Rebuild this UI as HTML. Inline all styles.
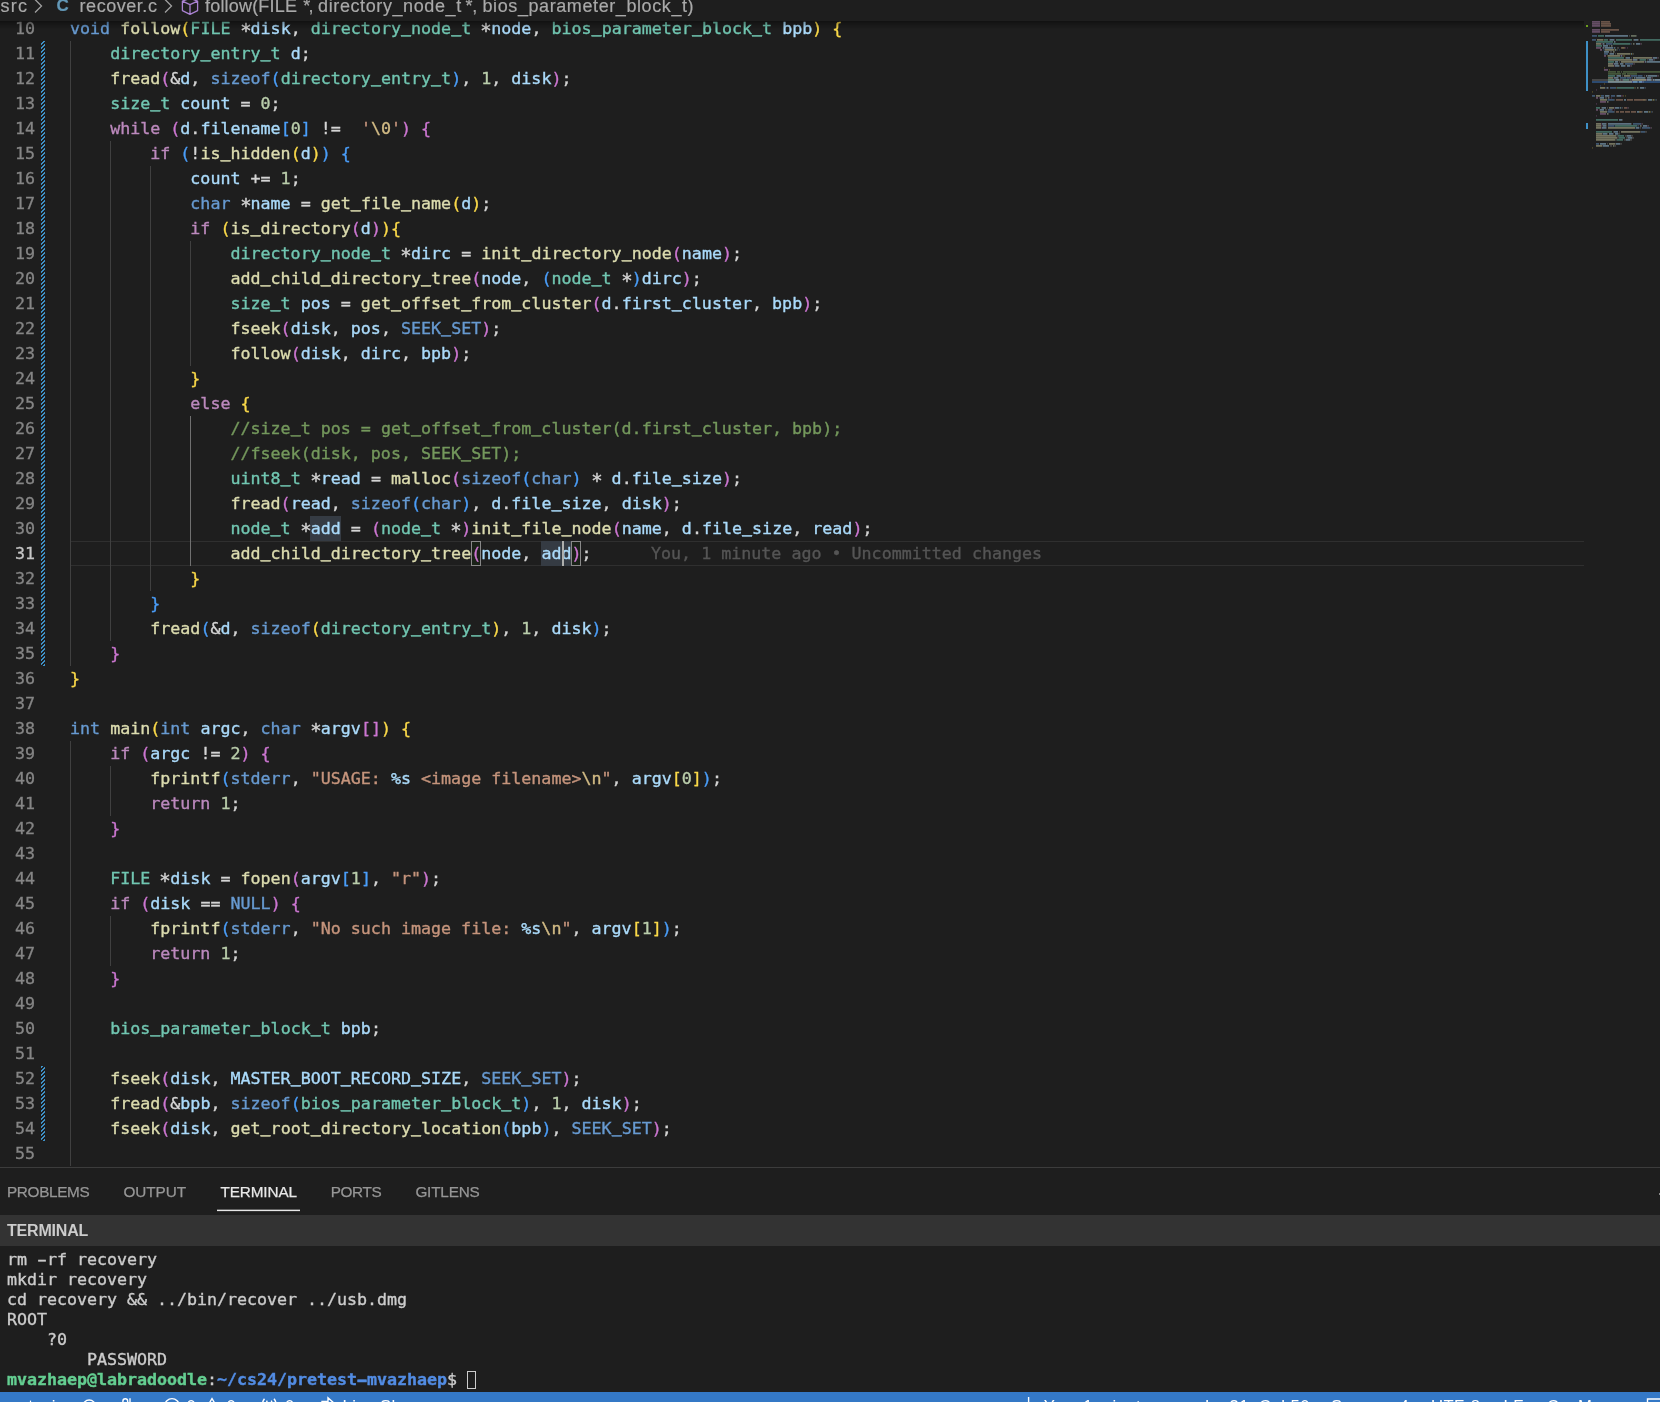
<!DOCTYPE html>
<html><head><meta charset="utf-8"><title>recover.c</title>
<style>
html,body{margin:0;padding:0;background:#1e1e1e;}
body{width:1660px;height:1402px;position:relative;overflow:hidden;font-family:"Liberation Sans",sans-serif;}
#root{position:absolute;left:0;top:0;width:1660px;height:1402px;overflow:hidden;will-change:transform;}
#ed{position:absolute;left:0;top:16px;width:1584px;height:1150px;overflow:hidden;font-family:"DejaVu Sans Mono","Liberation Mono",monospace;font-size:16.66px;line-height:25px;color:#d4d4d4;}
.row{height:25px;position:relative;}
.ln{position:absolute;left:0;top:0;width:35px;text-align:right;color:#858585;-webkit-text-stroke:.3px;}
.ln.cur{color:#c6c6c6;}
.code{position:absolute;left:70px;top:0;white-space:pre;-webkit-text-stroke:.36px;}
u{text-decoration:none;position:relative;top:-1.8px;text-shadow:0 .8px 0 currentColor;}
em{font-style:normal;display:inline-block;transform:translateY(2.4px) scale(1.14);}
.k{color:#679ad1}.c{color:#bc89bd}.t{color:#71c6b1}.f{color:#dcdcaf}.v{color:#aadafa}.n{color:#bacdab}
.s{color:#c5947c}.e{color:#d2bb85}.cm{color:#74985c}.o{color:#d4d4d4}.b0{color:#f9d849}.b1{color:#cc76d1}.b2{color:#4a9df8}
.blame{color:#555555;position:absolute;left:581px;top:0;}
i.g{position:absolute;width:1px;background:#404040;display:block;}
i.ga{background:#707070;}
i.gut{position:absolute;left:41px;width:4px;display:block;background:repeating-linear-gradient(-45deg,#3e90c6 0,#3e90c6 1.6px,transparent 1.6px,transparent 2.83px);}
#curline{position:absolute;left:70px;top:541px;width:1514px;height:23px;border-top:1px solid #2f2f2f;border-bottom:1px solid #2f2f2f;}
.wh{position:absolute;height:25px;background:#353b43;}
.bm{position:absolute;height:23px;width:8px;border:1px solid #888;background:#1a2218;}
#cursor{position:absolute;width:2px;height:25px;background:#aeafad;}
#bc{-webkit-text-stroke:.2px;position:absolute;left:0;top:-5px;height:22px;line-height:22px;font-size:18px;color:#a9a9a9;white-space:pre;}
#bc span{position:absolute;top:0;}
#shadow{position:absolute;left:0;top:21px;width:1584px;height:8px;background:linear-gradient(rgba(0,0,0,.42) 0,rgba(0,0,0,.3) 20%,rgba(0,0,0,0) 100%);}
#panel{position:absolute;left:0;top:1167px;width:1660px;height:225px;border-top:1px solid #3c3c3c;}
.tab{-webkit-text-stroke:.25px;position:absolute;top:14.7px;font-size:15.3px;color:#969696;line-height:18px;}
.tab.act{color:#e7e7e7;}
#tul{position:absolute;left:217px;top:42px;width:83px;height:1px;background:#e7e7e7;box-shadow:0 -1px 0 rgba(231,231,231,.35),0 1px 0 rgba(231,231,231,.12);}
#thead{position:absolute;left:0;top:47px;width:1660px;height:31px;background:#333333;}
#thead b{position:absolute;left:7px;top:6.6px;font-size:16px;line-height:18px;color:#cccccc;letter-spacing:-.2px;}
#term{position:absolute;left:7px;top:81.5px;font-family:"DejaVu Sans Mono","Liberation Mono",monospace;font-size:16.66px;line-height:20px;color:#cccccc;white-space:pre;-webkit-text-stroke:.36px;letter-spacing:-.03px;}
.tl{height:20px;}
.hy{display:inline-block;transform:scaleX(1.7);}
.tg{color:#64ce91;}.tb{color:#528ce3;}
.tcur{display:inline-block;width:9px;height:18px;border:1px solid #ccc;vertical-align:-4px;box-sizing:border-box;}
#status{position:absolute;left:0;top:1392px;width:1660px;height:30px;background:#3478c6;color:#fff;font-size:16.67px;line-height:20px;white-space:pre;letter-spacing:.45px;}
#status span{position:absolute;top:5.3px;}
</style></head><body><div id="root">
<div id="bc"><span style="left:0.6px;letter-spacing:1.2px">src </span><span style="left:56.5px;color:#6398b7;font-weight:bold;font-size:17px">C </span><span style="left:79.6px;letter-spacing:0.534px">recover.c </span><span style="left:205px;letter-spacing:0.187px">follow(FILE </span><span style="left:303.2px;letter-spacing:-1.6px">*, </span><span style="left:318.1px;letter-spacing:0.6px">directory_node_t </span><span style="left:465.6px;letter-spacing:-.4px">*, </span><span style="left:482.5px;letter-spacing:0.59px">bios_parameter_block_t)</span>
<svg style="position:absolute;left:0;top:0" width="260" height="22" viewBox="0 0 260 22"><g fill="none" stroke="#a0a0a0" stroke-width="1.3"><path d="M35 4.5 L41.5 11 L35 17.5"/><path d="M165 4.5 L171.5 11 L165 17.5"/></g><g fill="none" stroke="#aa82d2" stroke-width="1.3" stroke-linejoin="round"><path d="M190 3.2 L197.6 6.2 L197.6 15.6 L190 19.3 L182.4 15.6 L182.4 6.2 Z M182.4 6.2 L190 9.6 L197.6 6.2 M190 9.6 L190 19.3"/></g></svg></div>
<div id="curline"></div>
<div class="wh" style="left:310px;top:516px;width:31px"></div>
<div class="wh" style="left:541px;top:541px;width:30px"></div>
<i class="g" style="left:70px;top:41px;height:625px"></i><i class="g" style="left:110px;top:141px;height:500px"></i><i class="g" style="left:150px;top:166px;height:425px"></i><i class="g" style="left:190px;top:241px;height:125px"></i><i class="g ga" style="left:190px;top:416px;height:150px"></i><i class="g" style="left:70px;top:741px;height:425px"></i><i class="g" style="left:110px;top:766px;height:50px"></i><i class="g" style="left:110px;top:916px;height:50px"></i>
<i class="gut" style="top:41px;height:625px"></i><i class="gut" style="top:1066px;height:75px"></i>
<div class="bm" style="left:471px;top:541px"></div>
<div class="bm" style="left:571px;top:541px"></div>
<div id="ed">
<div class="row"><span class="ln">10</span><span class="code"><span class="k">void</span> <span class="f">follow</span><span class="b0">(</span><span class="t">FILE</span> <span class="o"><em>*</em></span><span class="v">disk</span><span class="o">,</span> <span class="t">directory<u>_</u>node<u>_</u>t</span> <span class="o"><em>*</em></span><span class="v">node</span><span class="o">,</span> <span class="t">bios<u>_</u>parameter<u>_</u>block<u>_</u>t</span> <span class="v">bpb</span><span class="b0">)</span> <span class="b0">{</span></span></div>
<div class="row"><span class="ln">11</span><span class="code">    <span class="t">directory<u>_</u>entry<u>_</u>t</span> <span class="v">d</span><span class="o">;</span></span></div>
<div class="row"><span class="ln">12</span><span class="code">    <span class="f">fread</span><span class="b1">(</span><span class="o">&amp;</span><span class="v">d</span><span class="o">,</span> <span class="k">sizeof</span><span class="b2">(</span><span class="t">directory<u>_</u>entry<u>_</u>t</span><span class="b2">)</span><span class="o">,</span> <span class="n">1</span><span class="o">,</span> <span class="v">disk</span><span class="b1">)</span><span class="o">;</span></span></div>
<div class="row"><span class="ln">13</span><span class="code">    <span class="t">size<u>_</u>t</span> <span class="v">count</span> <span class="o">=</span> <span class="n">0</span><span class="o">;</span></span></div>
<div class="row"><span class="ln">14</span><span class="code">    <span class="c">while</span> <span class="b1">(</span><span class="v">d</span><span class="o">.</span><span class="v">filename</span><span class="b2">[</span><span class="n">0</span><span class="b2">]</span> <span class="o">!=</span>  <span class="s">'</span><span class="e">\0</span><span class="s">'</span><span class="b1">)</span> <span class="b1">{</span></span></div>
<div class="row"><span class="ln">15</span><span class="code">        <span class="c">if</span> <span class="b2">(</span><span class="o">!</span><span class="f">is<u>_</u>hidden</span><span class="b0">(</span><span class="v">d</span><span class="b0">)</span><span class="b2">)</span> <span class="b2">{</span></span></div>
<div class="row"><span class="ln">16</span><span class="code">            <span class="v">count</span> <span class="o">+=</span> <span class="n">1</span><span class="o">;</span></span></div>
<div class="row"><span class="ln">17</span><span class="code">            <span class="k">char</span> <span class="o"><em>*</em></span><span class="v">name</span> <span class="o">=</span> <span class="f">get<u>_</u>file<u>_</u>name</span><span class="b0">(</span><span class="v">d</span><span class="b0">)</span><span class="o">;</span></span></div>
<div class="row"><span class="ln">18</span><span class="code">            <span class="c">if</span> <span class="b0">(</span><span class="f">is<u>_</u>directory</span><span class="b1">(</span><span class="v">d</span><span class="b1">)</span><span class="b0">){</span></span></div>
<div class="row"><span class="ln">19</span><span class="code">                <span class="t">directory<u>_</u>node<u>_</u>t</span> <span class="o"><em>*</em></span><span class="v">dirc</span> <span class="o">=</span> <span class="f">init<u>_</u>directory<u>_</u>node</span><span class="b1">(</span><span class="v">name</span><span class="b1">)</span><span class="o">;</span></span></div>
<div class="row"><span class="ln">20</span><span class="code">                <span class="f">add<u>_</u>child<u>_</u>directory<u>_</u>tree</span><span class="b1">(</span><span class="v">node</span><span class="o">,</span> <span class="b2">(</span><span class="t">node<u>_</u>t</span> <span class="o"><em>*</em></span><span class="b2">)</span><span class="v">dirc</span><span class="b1">)</span><span class="o">;</span></span></div>
<div class="row"><span class="ln">21</span><span class="code">                <span class="t">size<u>_</u>t</span> <span class="v">pos</span> <span class="o">=</span> <span class="f">get<u>_</u>offset<u>_</u>from<u>_</u>cluster</span><span class="b1">(</span><span class="v">d</span><span class="o">.</span><span class="v">first<u>_</u>cluster</span><span class="o">,</span> <span class="v">bpb</span><span class="b1">)</span><span class="o">;</span></span></div>
<div class="row"><span class="ln">22</span><span class="code">                <span class="f">fseek</span><span class="b1">(</span><span class="v">disk</span><span class="o">,</span> <span class="v">pos</span><span class="o">,</span> <span class="k">SEEK<u>_</u>SET</span><span class="b1">)</span><span class="o">;</span></span></div>
<div class="row"><span class="ln">23</span><span class="code">                <span class="f">follow</span><span class="b1">(</span><span class="v">disk</span><span class="o">,</span> <span class="v">dirc</span><span class="o">,</span> <span class="v">bpb</span><span class="b1">)</span><span class="o">;</span></span></div>
<div class="row"><span class="ln">24</span><span class="code">            <span class="b0">}</span></span></div>
<div class="row"><span class="ln">25</span><span class="code">            <span class="c">else</span> <span class="b0">{</span></span></div>
<div class="row"><span class="ln">26</span><span class="code">                <span class="cm">//size<u>_</u>t pos = get<u>_</u>offset<u>_</u>from<u>_</u>cluster(d.first<u>_</u>cluster, bpb);</span></span></div>
<div class="row"><span class="ln">27</span><span class="code">                <span class="cm">//fseek(disk, pos, SEEK<u>_</u>SET);</span></span></div>
<div class="row"><span class="ln">28</span><span class="code">                <span class="t">uint8<u>_</u>t</span> <span class="o"><em>*</em></span><span class="v">read</span> <span class="o">=</span> <span class="f">malloc</span><span class="b1">(</span><span class="k">sizeof</span><span class="b2">(</span><span class="k">char</span><span class="b2">)</span> <span class="o"><em>*</em></span> <span class="v">d</span><span class="o">.</span><span class="v">file<u>_</u>size</span><span class="b1">)</span><span class="o">;</span></span></div>
<div class="row"><span class="ln">29</span><span class="code">                <span class="f">fread</span><span class="b1">(</span><span class="v">read</span><span class="o">,</span> <span class="k">sizeof</span><span class="b2">(</span><span class="k">char</span><span class="b2">)</span><span class="o">,</span> <span class="v">d</span><span class="o">.</span><span class="v">file<u>_</u>size</span><span class="o">,</span> <span class="v">disk</span><span class="b1">)</span><span class="o">;</span></span></div>
<div class="row"><span class="ln">30</span><span class="code">                <span class="t">node<u>_</u>t</span> <span class="o"><em>*</em></span><span class="v">add</span> <span class="o">=</span> <span class="b1">(</span><span class="t">node<u>_</u>t</span> <span class="o"><em>*</em></span><span class="b1">)</span><span class="f">init<u>_</u>file<u>_</u>node</span><span class="b1">(</span><span class="v">name</span><span class="o">,</span> <span class="v">d</span><span class="o">.</span><span class="v">file<u>_</u>size</span><span class="o">,</span> <span class="v">read</span><span class="b1">)</span><span class="o">;</span></span></div>
<div class="row"><span class="ln cur">31</span><span class="code">                <span class="f">add<u>_</u>child<u>_</u>directory<u>_</u>tree</span><span class="b1">(</span><span class="v">node</span><span class="o">,</span> <span class="v">add</span><span class="b1">)</span><span class="o">;</span><span class="blame">You, 1 minute ago • Uncommitted changes</span></span></div>
<div class="row"><span class="ln">32</span><span class="code">            <span class="b0">}</span></span></div>
<div class="row"><span class="ln">33</span><span class="code">        <span class="b2">}</span></span></div>
<div class="row"><span class="ln">34</span><span class="code">        <span class="f">fread</span><span class="b2">(</span><span class="o">&amp;</span><span class="v">d</span><span class="o">,</span> <span class="k">sizeof</span><span class="b0">(</span><span class="t">directory<u>_</u>entry<u>_</u>t</span><span class="b0">)</span><span class="o">,</span> <span class="n">1</span><span class="o">,</span> <span class="v">disk</span><span class="b2">)</span><span class="o">;</span></span></div>
<div class="row"><span class="ln">35</span><span class="code">    <span class="b1">}</span></span></div>
<div class="row"><span class="ln">36</span><span class="code"><span class="b0">}</span></span></div>
<div class="row"><span class="ln">37</span><span class="code"></span></div>
<div class="row"><span class="ln">38</span><span class="code"><span class="k">int</span> <span class="f">main</span><span class="b0">(</span><span class="k">int</span> <span class="v">argc</span><span class="o">,</span> <span class="k">char</span> <span class="o"><em>*</em></span><span class="v">argv</span><span class="b1">[]</span><span class="b0">)</span> <span class="b0">{</span></span></div>
<div class="row"><span class="ln">39</span><span class="code">    <span class="c">if</span> <span class="b1">(</span><span class="v">argc</span> <span class="o">!=</span> <span class="n">2</span><span class="b1">)</span> <span class="b1">{</span></span></div>
<div class="row"><span class="ln">40</span><span class="code">        <span class="f">fprintf</span><span class="b2">(</span><span class="k">stderr</span><span class="o">,</span> <span class="s">"USAGE: </span><span class="v">%s</span><span class="s"> &lt;image filename&gt;</span><span class="e">\n</span><span class="s">"</span><span class="o">,</span> <span class="v">argv</span><span class="b0">[</span><span class="n">0</span><span class="b0">]</span><span class="b2">)</span><span class="o">;</span></span></div>
<div class="row"><span class="ln">41</span><span class="code">        <span class="c">return</span> <span class="n">1</span><span class="o">;</span></span></div>
<div class="row"><span class="ln">42</span><span class="code">    <span class="b1">}</span></span></div>
<div class="row"><span class="ln">43</span><span class="code"></span></div>
<div class="row"><span class="ln">44</span><span class="code">    <span class="t">FILE</span> <span class="o"><em>*</em></span><span class="v">disk</span> <span class="o">=</span> <span class="f">fopen</span><span class="b1">(</span><span class="v">argv</span><span class="b2">[</span><span class="n">1</span><span class="b2">]</span><span class="o">,</span> <span class="s">"r"</span><span class="b1">)</span><span class="o">;</span></span></div>
<div class="row"><span class="ln">45</span><span class="code">    <span class="c">if</span> <span class="b1">(</span><span class="v">disk</span> <span class="o">==</span> <span class="k">NULL</span><span class="b1">)</span> <span class="b1">{</span></span></div>
<div class="row"><span class="ln">46</span><span class="code">        <span class="f">fprintf</span><span class="b2">(</span><span class="k">stderr</span><span class="o">,</span> <span class="s">"No such image file: </span><span class="v">%s</span><span class="e">\n</span><span class="s">"</span><span class="o">,</span> <span class="v">argv</span><span class="b0">[</span><span class="n">1</span><span class="b0">]</span><span class="b2">)</span><span class="o">;</span></span></div>
<div class="row"><span class="ln">47</span><span class="code">        <span class="c">return</span> <span class="n">1</span><span class="o">;</span></span></div>
<div class="row"><span class="ln">48</span><span class="code">    <span class="b1">}</span></span></div>
<div class="row"><span class="ln">49</span><span class="code"></span></div>
<div class="row"><span class="ln">50</span><span class="code">    <span class="t">bios<u>_</u>parameter<u>_</u>block<u>_</u>t</span> <span class="v">bpb</span><span class="o">;</span></span></div>
<div class="row"><span class="ln">51</span><span class="code"></span></div>
<div class="row"><span class="ln">52</span><span class="code">    <span class="f">fseek</span><span class="b1">(</span><span class="v">disk</span><span class="o">,</span> <span class="v">MASTER<u>_</u>BOOT<u>_</u>RECORD<u>_</u>SIZE</span><span class="o">,</span> <span class="k">SEEK<u>_</u>SET</span><span class="b1">)</span><span class="o">;</span></span></div>
<div class="row"><span class="ln">53</span><span class="code">    <span class="f">fread</span><span class="b1">(</span><span class="o">&amp;</span><span class="v">bpb</span><span class="o">,</span> <span class="k">sizeof</span><span class="b2">(</span><span class="t">bios<u>_</u>parameter<u>_</u>block<u>_</u>t</span><span class="b2">)</span><span class="o">,</span> <span class="n">1</span><span class="o">,</span> <span class="v">disk</span><span class="b1">)</span><span class="o">;</span></span></div>
<div class="row"><span class="ln">54</span><span class="code">    <span class="f">fseek</span><span class="b1">(</span><span class="v">disk</span><span class="o">,</span> <span class="f">get<u>_</u>root<u>_</u>directory<u>_</u>location</span><span class="b2">(</span><span class="v">bpb</span><span class="b2">)</span><span class="o">,</span> <span class="k">SEEK<u>_</u>SET</span><span class="b1">)</span><span class="o">;</span></span></div>
<div class="row"><span class="ln">55</span><span class="code"></span></div>
</div>
<div id="cursor" style="left:562px;top:541px"></div>
<div id="shadow"></div>
<svg id="mm" style="position:absolute;left:0;top:0" width="1660" height="200" viewBox="0 0 1660 200">
<rect x="1592" y="79" width="68" height="2" fill="#454545"/><rect x="1592" y="81" width="68" height="2" fill="#2c4a70"/>
<g opacity=".5"><rect x="1592" y="21.1" width="8" height="1.6" fill="#bc89bd"/><rect x="1601" y="21.1" width="9" height="1.6" fill="#c5947c"/><rect x="1592" y="23.1" width="8" height="1.6" fill="#bc89bd"/><rect x="1601" y="23.1" width="10" height="1.6" fill="#c5947c"/><rect x="1592" y="25.1" width="8" height="1.6" fill="#bc89bd"/><rect x="1601" y="25.1" width="10" height="1.6" fill="#c5947c"/><rect x="1592" y="29.1" width="8" height="1.6" fill="#bc89bd"/><rect x="1601" y="29.1" width="18" height="1.6" fill="#c5947c"/><rect x="1592" y="31.1" width="8" height="1.6" fill="#bc89bd"/><rect x="1601" y="31.1" width="9" height="1.6" fill="#c5947c"/><rect x="1592" y="35.1" width="5" height="1.6" fill="#679ad1"/><rect x="1598" y="35.1" width="6" height="1.6" fill="#71c6b1"/><rect x="1605" y="35.1" width="23" height="1.6" fill="#aadafa"/><rect x="1629" y="35.1" width="1" height="1.6" fill="#d4d4d4" opacity=".45"/><rect x="1631" y="35.1" width="5" height="1.6" fill="#bacdab"/><rect x="1636" y="35.1" width="1" height="1.6" fill="#d4d4d4" opacity=".45"/><rect x="1592" y="39.1" width="4" height="1.6" fill="#679ad1"/><rect x="1597" y="39.1" width="6" height="1.6" fill="#dcdcaf"/><rect x="1603" y="39.1" width="1" height="1.6" fill="#f9d849" opacity=".45"/><rect x="1604" y="39.1" width="4" height="1.6" fill="#71c6b1"/><rect x="1609" y="39.1" width="1" height="1.6" fill="#d4d4d4" opacity=".45"/><rect x="1610" y="39.1" width="4" height="1.6" fill="#aadafa"/><rect x="1614" y="39.1" width="1" height="1.6" fill="#d4d4d4" opacity=".45"/><rect x="1616" y="39.1" width="16" height="1.6" fill="#71c6b1"/><rect x="1633" y="39.1" width="1" height="1.6" fill="#d4d4d4" opacity=".45"/><rect x="1634" y="39.1" width="4" height="1.6" fill="#aadafa"/><rect x="1638" y="39.1" width="1" height="1.6" fill="#d4d4d4" opacity=".45"/><rect x="1640" y="39.1" width="20" height="1.6" fill="#71c6b1"/><rect x="1596" y="41.1" width="17" height="1.6" fill="#71c6b1"/><rect x="1614" y="41.1" width="1" height="1.6" fill="#aadafa"/><rect x="1615" y="41.1" width="1" height="1.6" fill="#d4d4d4" opacity=".45"/><rect x="1596" y="43.1" width="5" height="1.6" fill="#dcdcaf"/><rect x="1601" y="43.1" width="1" height="1.6" fill="#cc76d1" opacity=".45"/><rect x="1602" y="43.1" width="1" height="1.6" fill="#d4d4d4" opacity=".45"/><rect x="1603" y="43.1" width="1" height="1.6" fill="#aadafa"/><rect x="1604" y="43.1" width="1" height="1.6" fill="#d4d4d4" opacity=".45"/><rect x="1606" y="43.1" width="6" height="1.6" fill="#679ad1"/><rect x="1612" y="43.1" width="1" height="1.6" fill="#4a9df8" opacity=".45"/><rect x="1613" y="43.1" width="17" height="1.6" fill="#71c6b1"/><rect x="1630" y="43.1" width="1" height="1.6" fill="#4a9df8" opacity=".45"/><rect x="1631" y="43.1" width="1" height="1.6" fill="#d4d4d4" opacity=".45"/><rect x="1633" y="43.1" width="1" height="1.6" fill="#bacdab"/><rect x="1634" y="43.1" width="1" height="1.6" fill="#d4d4d4" opacity=".45"/><rect x="1636" y="43.1" width="4" height="1.6" fill="#aadafa"/><rect x="1640" y="43.1" width="1" height="1.6" fill="#cc76d1" opacity=".45"/><rect x="1641" y="43.1" width="1" height="1.6" fill="#d4d4d4" opacity=".45"/><rect x="1596" y="45.1" width="6" height="1.6" fill="#71c6b1"/><rect x="1603" y="45.1" width="5" height="1.6" fill="#aadafa"/><rect x="1609" y="45.1" width="1" height="1.6" fill="#d4d4d4" opacity=".45"/><rect x="1611" y="45.1" width="1" height="1.6" fill="#bacdab"/><rect x="1612" y="45.1" width="1" height="1.6" fill="#d4d4d4" opacity=".45"/><rect x="1596" y="47.1" width="5" height="1.6" fill="#bc89bd"/><rect x="1602" y="47.1" width="1" height="1.6" fill="#cc76d1" opacity=".45"/><rect x="1603" y="47.1" width="1" height="1.6" fill="#aadafa"/><rect x="1604" y="47.1" width="1" height="1.6" fill="#d4d4d4" opacity=".45"/><rect x="1605" y="47.1" width="8" height="1.6" fill="#aadafa"/><rect x="1613" y="47.1" width="1" height="1.6" fill="#4a9df8" opacity=".45"/><rect x="1614" y="47.1" width="1" height="1.6" fill="#bacdab"/><rect x="1615" y="47.1" width="1" height="1.6" fill="#4a9df8" opacity=".45"/><rect x="1617" y="47.1" width="2" height="1.6" fill="#d4d4d4" opacity=".45"/><rect x="1621" y="47.1" width="1" height="1.6" fill="#c5947c"/><rect x="1622" y="47.1" width="2" height="1.6" fill="#d2bb85"/><rect x="1624" y="47.1" width="1" height="1.6" fill="#c5947c"/><rect x="1625" y="47.1" width="1" height="1.6" fill="#cc76d1" opacity=".45"/><rect x="1627" y="47.1" width="1" height="1.6" fill="#cc76d1" opacity=".45"/><rect x="1600" y="49.1" width="2" height="1.6" fill="#bc89bd"/><rect x="1603" y="49.1" width="1" height="1.6" fill="#4a9df8" opacity=".45"/><rect x="1604" y="49.1" width="1" height="1.6" fill="#d4d4d4" opacity=".45"/><rect x="1605" y="49.1" width="9" height="1.6" fill="#dcdcaf"/><rect x="1614" y="49.1" width="1" height="1.6" fill="#f9d849" opacity=".45"/><rect x="1615" y="49.1" width="1" height="1.6" fill="#aadafa"/><rect x="1616" y="49.1" width="1" height="1.6" fill="#f9d849" opacity=".45"/><rect x="1617" y="49.1" width="1" height="1.6" fill="#4a9df8" opacity=".45"/><rect x="1619" y="49.1" width="1" height="1.6" fill="#4a9df8" opacity=".45"/><rect x="1604" y="51.1" width="5" height="1.6" fill="#aadafa"/><rect x="1610" y="51.1" width="2" height="1.6" fill="#d4d4d4" opacity=".45"/><rect x="1613" y="51.1" width="1" height="1.6" fill="#bacdab"/><rect x="1614" y="51.1" width="1" height="1.6" fill="#d4d4d4" opacity=".45"/><rect x="1604" y="53.1" width="4" height="1.6" fill="#679ad1"/><rect x="1609" y="53.1" width="1" height="1.6" fill="#d4d4d4" opacity=".45"/><rect x="1610" y="53.1" width="4" height="1.6" fill="#aadafa"/><rect x="1615" y="53.1" width="1" height="1.6" fill="#d4d4d4" opacity=".45"/><rect x="1617" y="53.1" width="13" height="1.6" fill="#dcdcaf"/><rect x="1630" y="53.1" width="1" height="1.6" fill="#f9d849" opacity=".45"/><rect x="1631" y="53.1" width="1" height="1.6" fill="#aadafa"/><rect x="1632" y="53.1" width="1" height="1.6" fill="#f9d849" opacity=".45"/><rect x="1633" y="53.1" width="1" height="1.6" fill="#d4d4d4" opacity=".45"/><rect x="1604" y="55.1" width="2" height="1.6" fill="#bc89bd"/><rect x="1607" y="55.1" width="1" height="1.6" fill="#f9d849" opacity=".45"/><rect x="1608" y="55.1" width="12" height="1.6" fill="#dcdcaf"/><rect x="1620" y="55.1" width="1" height="1.6" fill="#cc76d1" opacity=".45"/><rect x="1621" y="55.1" width="1" height="1.6" fill="#aadafa"/><rect x="1622" y="55.1" width="1" height="1.6" fill="#cc76d1" opacity=".45"/><rect x="1623" y="55.1" width="2" height="1.6" fill="#f9d849" opacity=".45"/><rect x="1608" y="57.1" width="16" height="1.6" fill="#71c6b1"/><rect x="1625" y="57.1" width="1" height="1.6" fill="#d4d4d4" opacity=".45"/><rect x="1626" y="57.1" width="4" height="1.6" fill="#aadafa"/><rect x="1631" y="57.1" width="1" height="1.6" fill="#d4d4d4" opacity=".45"/><rect x="1633" y="57.1" width="19" height="1.6" fill="#dcdcaf"/><rect x="1652" y="57.1" width="1" height="1.6" fill="#cc76d1" opacity=".45"/><rect x="1653" y="57.1" width="4" height="1.6" fill="#aadafa"/><rect x="1657" y="57.1" width="1" height="1.6" fill="#cc76d1" opacity=".45"/><rect x="1658" y="57.1" width="1" height="1.6" fill="#d4d4d4" opacity=".45"/><rect x="1608" y="59.1" width="24" height="1.6" fill="#dcdcaf"/><rect x="1632" y="59.1" width="1" height="1.6" fill="#cc76d1" opacity=".45"/><rect x="1633" y="59.1" width="4" height="1.6" fill="#aadafa"/><rect x="1637" y="59.1" width="1" height="1.6" fill="#d4d4d4" opacity=".45"/><rect x="1639" y="59.1" width="1" height="1.6" fill="#4a9df8" opacity=".45"/><rect x="1640" y="59.1" width="6" height="1.6" fill="#71c6b1"/><rect x="1647" y="59.1" width="1" height="1.6" fill="#d4d4d4" opacity=".45"/><rect x="1648" y="59.1" width="1" height="1.6" fill="#4a9df8" opacity=".45"/><rect x="1649" y="59.1" width="4" height="1.6" fill="#aadafa"/><rect x="1653" y="59.1" width="1" height="1.6" fill="#cc76d1" opacity=".45"/><rect x="1654" y="59.1" width="1" height="1.6" fill="#d4d4d4" opacity=".45"/><rect x="1608" y="61.1" width="6" height="1.6" fill="#71c6b1"/><rect x="1615" y="61.1" width="3" height="1.6" fill="#aadafa"/><rect x="1619" y="61.1" width="1" height="1.6" fill="#d4d4d4" opacity=".45"/><rect x="1621" y="61.1" width="23" height="1.6" fill="#dcdcaf"/><rect x="1644" y="61.1" width="1" height="1.6" fill="#cc76d1" opacity=".45"/><rect x="1645" y="61.1" width="1" height="1.6" fill="#aadafa"/><rect x="1646" y="61.1" width="1" height="1.6" fill="#d4d4d4" opacity=".45"/><rect x="1647" y="61.1" width="13" height="1.6" fill="#aadafa"/><rect x="1608" y="63.1" width="5" height="1.6" fill="#dcdcaf"/><rect x="1613" y="63.1" width="1" height="1.6" fill="#cc76d1" opacity=".45"/><rect x="1614" y="63.1" width="4" height="1.6" fill="#aadafa"/><rect x="1618" y="63.1" width="1" height="1.6" fill="#d4d4d4" opacity=".45"/><rect x="1620" y="63.1" width="3" height="1.6" fill="#aadafa"/><rect x="1623" y="63.1" width="1" height="1.6" fill="#d4d4d4" opacity=".45"/><rect x="1625" y="63.1" width="8" height="1.6" fill="#679ad1"/><rect x="1633" y="63.1" width="1" height="1.6" fill="#cc76d1" opacity=".45"/><rect x="1634" y="63.1" width="1" height="1.6" fill="#d4d4d4" opacity=".45"/><rect x="1608" y="65.1" width="6" height="1.6" fill="#dcdcaf"/><rect x="1614" y="65.1" width="1" height="1.6" fill="#cc76d1" opacity=".45"/><rect x="1615" y="65.1" width="4" height="1.6" fill="#aadafa"/><rect x="1619" y="65.1" width="1" height="1.6" fill="#d4d4d4" opacity=".45"/><rect x="1621" y="65.1" width="4" height="1.6" fill="#aadafa"/><rect x="1625" y="65.1" width="1" height="1.6" fill="#d4d4d4" opacity=".45"/><rect x="1627" y="65.1" width="3" height="1.6" fill="#aadafa"/><rect x="1630" y="65.1" width="1" height="1.6" fill="#cc76d1" opacity=".45"/><rect x="1631" y="65.1" width="1" height="1.6" fill="#d4d4d4" opacity=".45"/><rect x="1604" y="67.1" width="1" height="1.6" fill="#f9d849" opacity=".45"/><rect x="1604" y="69.1" width="4" height="1.6" fill="#bc89bd"/><rect x="1609" y="69.1" width="1" height="1.6" fill="#f9d849" opacity=".45"/><rect x="1608" y="71.1" width="8" height="1.6" fill="#74985c"/><rect x="1617" y="71.1" width="3" height="1.6" fill="#74985c"/><rect x="1621" y="71.1" width="1" height="1.6" fill="#74985c"/><rect x="1623" y="71.1" width="37" height="1.6" fill="#74985c"/><rect x="1608" y="73.1" width="13" height="1.6" fill="#74985c"/><rect x="1622" y="73.1" width="4" height="1.6" fill="#74985c"/><rect x="1627" y="73.1" width="10" height="1.6" fill="#74985c"/><rect x="1608" y="75.1" width="7" height="1.6" fill="#71c6b1"/><rect x="1616" y="75.1" width="1" height="1.6" fill="#d4d4d4" opacity=".45"/><rect x="1617" y="75.1" width="4" height="1.6" fill="#aadafa"/><rect x="1622" y="75.1" width="1" height="1.6" fill="#d4d4d4" opacity=".45"/><rect x="1624" y="75.1" width="6" height="1.6" fill="#dcdcaf"/><rect x="1630" y="75.1" width="1" height="1.6" fill="#cc76d1" opacity=".45"/><rect x="1631" y="75.1" width="6" height="1.6" fill="#679ad1"/><rect x="1637" y="75.1" width="1" height="1.6" fill="#4a9df8" opacity=".45"/><rect x="1638" y="75.1" width="4" height="1.6" fill="#679ad1"/><rect x="1642" y="75.1" width="1" height="1.6" fill="#4a9df8" opacity=".45"/><rect x="1644" y="75.1" width="1" height="1.6" fill="#d4d4d4" opacity=".45"/><rect x="1646" y="75.1" width="1" height="1.6" fill="#aadafa"/><rect x="1647" y="75.1" width="1" height="1.6" fill="#d4d4d4" opacity=".45"/><rect x="1648" y="75.1" width="9" height="1.6" fill="#aadafa"/><rect x="1657" y="75.1" width="1" height="1.6" fill="#cc76d1" opacity=".45"/><rect x="1658" y="75.1" width="1" height="1.6" fill="#d4d4d4" opacity=".45"/><rect x="1608" y="77.1" width="5" height="1.6" fill="#dcdcaf"/><rect x="1613" y="77.1" width="1" height="1.6" fill="#cc76d1" opacity=".45"/><rect x="1614" y="77.1" width="4" height="1.6" fill="#aadafa"/><rect x="1618" y="77.1" width="1" height="1.6" fill="#d4d4d4" opacity=".45"/><rect x="1620" y="77.1" width="6" height="1.6" fill="#679ad1"/><rect x="1626" y="77.1" width="1" height="1.6" fill="#4a9df8" opacity=".45"/><rect x="1627" y="77.1" width="4" height="1.6" fill="#679ad1"/><rect x="1631" y="77.1" width="1" height="1.6" fill="#4a9df8" opacity=".45"/><rect x="1632" y="77.1" width="1" height="1.6" fill="#d4d4d4" opacity=".45"/><rect x="1634" y="77.1" width="1" height="1.6" fill="#aadafa"/><rect x="1635" y="77.1" width="1" height="1.6" fill="#d4d4d4" opacity=".45"/><rect x="1636" y="77.1" width="9" height="1.6" fill="#aadafa"/><rect x="1645" y="77.1" width="1" height="1.6" fill="#d4d4d4" opacity=".45"/><rect x="1647" y="77.1" width="4" height="1.6" fill="#aadafa"/><rect x="1651" y="77.1" width="1" height="1.6" fill="#cc76d1" opacity=".45"/><rect x="1652" y="77.1" width="1" height="1.6" fill="#d4d4d4" opacity=".45"/><rect x="1608" y="79.1" width="6" height="1.6" fill="#71c6b1"/><rect x="1615" y="79.1" width="1" height="1.6" fill="#d4d4d4" opacity=".45"/><rect x="1616" y="79.1" width="3" height="1.6" fill="#aadafa"/><rect x="1620" y="79.1" width="1" height="1.6" fill="#d4d4d4" opacity=".45"/><rect x="1622" y="79.1" width="1" height="1.6" fill="#cc76d1" opacity=".45"/><rect x="1623" y="79.1" width="6" height="1.6" fill="#71c6b1"/><rect x="1630" y="79.1" width="1" height="1.6" fill="#d4d4d4" opacity=".45"/><rect x="1631" y="79.1" width="1" height="1.6" fill="#cc76d1" opacity=".45"/><rect x="1632" y="79.1" width="14" height="1.6" fill="#dcdcaf"/><rect x="1646" y="79.1" width="1" height="1.6" fill="#cc76d1" opacity=".45"/><rect x="1647" y="79.1" width="4" height="1.6" fill="#aadafa"/><rect x="1651" y="79.1" width="1" height="1.6" fill="#d4d4d4" opacity=".45"/><rect x="1653" y="79.1" width="1" height="1.6" fill="#aadafa"/><rect x="1654" y="79.1" width="1" height="1.6" fill="#d4d4d4" opacity=".45"/><rect x="1655" y="79.1" width="5" height="1.6" fill="#aadafa"/><rect x="1608" y="81.1" width="24" height="1.6" fill="#dcdcaf"/><rect x="1632" y="81.1" width="1" height="1.6" fill="#cc76d1" opacity=".45"/><rect x="1633" y="81.1" width="4" height="1.6" fill="#aadafa"/><rect x="1637" y="81.1" width="1" height="1.6" fill="#d4d4d4" opacity=".45"/><rect x="1639" y="81.1" width="3" height="1.6" fill="#aadafa"/><rect x="1642" y="81.1" width="1" height="1.6" fill="#cc76d1" opacity=".45"/><rect x="1643" y="81.1" width="1" height="1.6" fill="#d4d4d4" opacity=".45"/><rect x="1604" y="83.1" width="1" height="1.6" fill="#f9d849" opacity=".45"/><rect x="1600" y="85.1" width="1" height="1.6" fill="#4a9df8" opacity=".45"/><rect x="1600" y="87.1" width="5" height="1.6" fill="#dcdcaf"/><rect x="1605" y="87.1" width="1" height="1.6" fill="#4a9df8" opacity=".45"/><rect x="1606" y="87.1" width="1" height="1.6" fill="#d4d4d4" opacity=".45"/><rect x="1607" y="87.1" width="1" height="1.6" fill="#aadafa"/><rect x="1608" y="87.1" width="1" height="1.6" fill="#d4d4d4" opacity=".45"/><rect x="1610" y="87.1" width="6" height="1.6" fill="#679ad1"/><rect x="1616" y="87.1" width="1" height="1.6" fill="#f9d849" opacity=".45"/><rect x="1617" y="87.1" width="17" height="1.6" fill="#71c6b1"/><rect x="1634" y="87.1" width="1" height="1.6" fill="#f9d849" opacity=".45"/><rect x="1635" y="87.1" width="1" height="1.6" fill="#d4d4d4" opacity=".45"/><rect x="1637" y="87.1" width="1" height="1.6" fill="#bacdab"/><rect x="1638" y="87.1" width="1" height="1.6" fill="#d4d4d4" opacity=".45"/><rect x="1640" y="87.1" width="4" height="1.6" fill="#aadafa"/><rect x="1644" y="87.1" width="1" height="1.6" fill="#4a9df8" opacity=".45"/><rect x="1645" y="87.1" width="1" height="1.6" fill="#d4d4d4" opacity=".45"/><rect x="1596" y="89.1" width="1" height="1.6" fill="#cc76d1" opacity=".45"/><rect x="1592" y="91.1" width="1" height="1.6" fill="#f9d849" opacity=".45"/><rect x="1592" y="95.1" width="3" height="1.6" fill="#679ad1"/><rect x="1596" y="95.1" width="4" height="1.6" fill="#dcdcaf"/><rect x="1600" y="95.1" width="1" height="1.6" fill="#f9d849" opacity=".45"/><rect x="1601" y="95.1" width="3" height="1.6" fill="#679ad1"/><rect x="1605" y="95.1" width="4" height="1.6" fill="#aadafa"/><rect x="1609" y="95.1" width="1" height="1.6" fill="#d4d4d4" opacity=".45"/><rect x="1611" y="95.1" width="4" height="1.6" fill="#679ad1"/><rect x="1616" y="95.1" width="1" height="1.6" fill="#d4d4d4" opacity=".45"/><rect x="1617" y="95.1" width="4" height="1.6" fill="#aadafa"/><rect x="1621" y="95.1" width="2" height="1.6" fill="#cc76d1" opacity=".45"/><rect x="1623" y="95.1" width="1" height="1.6" fill="#f9d849" opacity=".45"/><rect x="1625" y="95.1" width="1" height="1.6" fill="#f9d849" opacity=".45"/><rect x="1596" y="97.1" width="2" height="1.6" fill="#bc89bd"/><rect x="1599" y="97.1" width="1" height="1.6" fill="#cc76d1" opacity=".45"/><rect x="1600" y="97.1" width="4" height="1.6" fill="#aadafa"/><rect x="1605" y="97.1" width="2" height="1.6" fill="#d4d4d4" opacity=".45"/><rect x="1608" y="97.1" width="1" height="1.6" fill="#bacdab"/><rect x="1609" y="97.1" width="1" height="1.6" fill="#cc76d1" opacity=".45"/><rect x="1611" y="97.1" width="1" height="1.6" fill="#cc76d1" opacity=".45"/><rect x="1600" y="99.1" width="7" height="1.6" fill="#dcdcaf"/><rect x="1607" y="99.1" width="1" height="1.6" fill="#4a9df8" opacity=".45"/><rect x="1608" y="99.1" width="6" height="1.6" fill="#679ad1"/><rect x="1614" y="99.1" width="1" height="1.6" fill="#d4d4d4" opacity=".45"/><rect x="1616" y="99.1" width="7" height="1.6" fill="#c5947c"/><rect x="1624" y="99.1" width="2" height="1.6" fill="#aadafa"/><rect x="1627" y="99.1" width="6" height="1.6" fill="#c5947c"/><rect x="1634" y="99.1" width="9" height="1.6" fill="#c5947c"/><rect x="1643" y="99.1" width="2" height="1.6" fill="#d2bb85"/><rect x="1645" y="99.1" width="1" height="1.6" fill="#c5947c"/><rect x="1646" y="99.1" width="1" height="1.6" fill="#d4d4d4" opacity=".45"/><rect x="1648" y="99.1" width="4" height="1.6" fill="#aadafa"/><rect x="1652" y="99.1" width="1" height="1.6" fill="#f9d849" opacity=".45"/><rect x="1653" y="99.1" width="1" height="1.6" fill="#bacdab"/><rect x="1654" y="99.1" width="1" height="1.6" fill="#f9d849" opacity=".45"/><rect x="1655" y="99.1" width="1" height="1.6" fill="#4a9df8" opacity=".45"/><rect x="1656" y="99.1" width="1" height="1.6" fill="#d4d4d4" opacity=".45"/><rect x="1600" y="101.1" width="6" height="1.6" fill="#bc89bd"/><rect x="1607" y="101.1" width="1" height="1.6" fill="#bacdab"/><rect x="1608" y="101.1" width="1" height="1.6" fill="#d4d4d4" opacity=".45"/><rect x="1596" y="103.1" width="1" height="1.6" fill="#cc76d1" opacity=".45"/><rect x="1596" y="107.1" width="4" height="1.6" fill="#71c6b1"/><rect x="1601" y="107.1" width="1" height="1.6" fill="#d4d4d4" opacity=".45"/><rect x="1602" y="107.1" width="4" height="1.6" fill="#aadafa"/><rect x="1607" y="107.1" width="1" height="1.6" fill="#d4d4d4" opacity=".45"/><rect x="1609" y="107.1" width="5" height="1.6" fill="#dcdcaf"/><rect x="1614" y="107.1" width="1" height="1.6" fill="#cc76d1" opacity=".45"/><rect x="1615" y="107.1" width="4" height="1.6" fill="#aadafa"/><rect x="1619" y="107.1" width="1" height="1.6" fill="#4a9df8" opacity=".45"/><rect x="1620" y="107.1" width="1" height="1.6" fill="#bacdab"/><rect x="1621" y="107.1" width="1" height="1.6" fill="#4a9df8" opacity=".45"/><rect x="1622" y="107.1" width="1" height="1.6" fill="#d4d4d4" opacity=".45"/><rect x="1624" y="107.1" width="3" height="1.6" fill="#c5947c"/><rect x="1627" y="107.1" width="1" height="1.6" fill="#cc76d1" opacity=".45"/><rect x="1628" y="107.1" width="1" height="1.6" fill="#d4d4d4" opacity=".45"/><rect x="1596" y="109.1" width="2" height="1.6" fill="#bc89bd"/><rect x="1599" y="109.1" width="1" height="1.6" fill="#cc76d1" opacity=".45"/><rect x="1600" y="109.1" width="4" height="1.6" fill="#aadafa"/><rect x="1605" y="109.1" width="2" height="1.6" fill="#d4d4d4" opacity=".45"/><rect x="1608" y="109.1" width="4" height="1.6" fill="#679ad1"/><rect x="1612" y="109.1" width="1" height="1.6" fill="#cc76d1" opacity=".45"/><rect x="1614" y="109.1" width="1" height="1.6" fill="#cc76d1" opacity=".45"/><rect x="1600" y="111.1" width="7" height="1.6" fill="#dcdcaf"/><rect x="1607" y="111.1" width="1" height="1.6" fill="#4a9df8" opacity=".45"/><rect x="1608" y="111.1" width="6" height="1.6" fill="#679ad1"/><rect x="1614" y="111.1" width="1" height="1.6" fill="#d4d4d4" opacity=".45"/><rect x="1616" y="111.1" width="3" height="1.6" fill="#c5947c"/><rect x="1620" y="111.1" width="4" height="1.6" fill="#c5947c"/><rect x="1625" y="111.1" width="5" height="1.6" fill="#c5947c"/><rect x="1631" y="111.1" width="5" height="1.6" fill="#c5947c"/><rect x="1637" y="111.1" width="2" height="1.6" fill="#aadafa"/><rect x="1639" y="111.1" width="2" height="1.6" fill="#d2bb85"/><rect x="1641" y="111.1" width="1" height="1.6" fill="#c5947c"/><rect x="1642" y="111.1" width="1" height="1.6" fill="#d4d4d4" opacity=".45"/><rect x="1644" y="111.1" width="4" height="1.6" fill="#aadafa"/><rect x="1648" y="111.1" width="1" height="1.6" fill="#f9d849" opacity=".45"/><rect x="1649" y="111.1" width="1" height="1.6" fill="#bacdab"/><rect x="1650" y="111.1" width="1" height="1.6" fill="#f9d849" opacity=".45"/><rect x="1651" y="111.1" width="1" height="1.6" fill="#4a9df8" opacity=".45"/><rect x="1652" y="111.1" width="1" height="1.6" fill="#d4d4d4" opacity=".45"/><rect x="1600" y="113.1" width="6" height="1.6" fill="#bc89bd"/><rect x="1607" y="113.1" width="1" height="1.6" fill="#bacdab"/><rect x="1608" y="113.1" width="1" height="1.6" fill="#d4d4d4" opacity=".45"/><rect x="1596" y="115.1" width="1" height="1.6" fill="#cc76d1" opacity=".45"/><rect x="1596" y="119.1" width="22" height="1.6" fill="#71c6b1"/><rect x="1619" y="119.1" width="3" height="1.6" fill="#aadafa"/><rect x="1622" y="119.1" width="1" height="1.6" fill="#d4d4d4" opacity=".45"/><rect x="1596" y="123.1" width="5" height="1.6" fill="#dcdcaf"/><rect x="1601" y="123.1" width="1" height="1.6" fill="#cc76d1" opacity=".45"/><rect x="1602" y="123.1" width="4" height="1.6" fill="#aadafa"/><rect x="1606" y="123.1" width="1" height="1.6" fill="#d4d4d4" opacity=".45"/><rect x="1608" y="123.1" width="23" height="1.6" fill="#aadafa"/><rect x="1631" y="123.1" width="1" height="1.6" fill="#d4d4d4" opacity=".45"/><rect x="1633" y="123.1" width="8" height="1.6" fill="#679ad1"/><rect x="1641" y="123.1" width="1" height="1.6" fill="#cc76d1" opacity=".45"/><rect x="1642" y="123.1" width="1" height="1.6" fill="#d4d4d4" opacity=".45"/><rect x="1596" y="125.1" width="5" height="1.6" fill="#dcdcaf"/><rect x="1601" y="125.1" width="1" height="1.6" fill="#cc76d1" opacity=".45"/><rect x="1602" y="125.1" width="1" height="1.6" fill="#d4d4d4" opacity=".45"/><rect x="1603" y="125.1" width="3" height="1.6" fill="#aadafa"/><rect x="1606" y="125.1" width="1" height="1.6" fill="#d4d4d4" opacity=".45"/><rect x="1608" y="125.1" width="6" height="1.6" fill="#679ad1"/><rect x="1614" y="125.1" width="1" height="1.6" fill="#4a9df8" opacity=".45"/><rect x="1615" y="125.1" width="22" height="1.6" fill="#71c6b1"/><rect x="1637" y="125.1" width="1" height="1.6" fill="#4a9df8" opacity=".45"/><rect x="1638" y="125.1" width="1" height="1.6" fill="#d4d4d4" opacity=".45"/><rect x="1640" y="125.1" width="1" height="1.6" fill="#bacdab"/><rect x="1641" y="125.1" width="1" height="1.6" fill="#d4d4d4" opacity=".45"/><rect x="1643" y="125.1" width="4" height="1.6" fill="#aadafa"/><rect x="1647" y="125.1" width="1" height="1.6" fill="#cc76d1" opacity=".45"/><rect x="1648" y="125.1" width="1" height="1.6" fill="#d4d4d4" opacity=".45"/><rect x="1596" y="127.1" width="5" height="1.6" fill="#dcdcaf"/><rect x="1601" y="127.1" width="1" height="1.6" fill="#cc76d1" opacity=".45"/><rect x="1602" y="127.1" width="4" height="1.6" fill="#aadafa"/><rect x="1606" y="127.1" width="1" height="1.6" fill="#d4d4d4" opacity=".45"/><rect x="1608" y="127.1" width="27" height="1.6" fill="#dcdcaf"/><rect x="1635" y="127.1" width="1" height="1.6" fill="#4a9df8" opacity=".45"/><rect x="1636" y="127.1" width="3" height="1.6" fill="#aadafa"/><rect x="1639" y="127.1" width="1" height="1.6" fill="#4a9df8" opacity=".45"/><rect x="1640" y="127.1" width="1" height="1.6" fill="#d4d4d4" opacity=".45"/><rect x="1642" y="127.1" width="8" height="1.6" fill="#679ad1"/><rect x="1650" y="127.1" width="1" height="1.6" fill="#cc76d1" opacity=".45"/><rect x="1651" y="127.1" width="1" height="1.6" fill="#d4d4d4" opacity=".45"/><rect x="1596" y="131.1" width="16" height="1.6" fill="#71c6b1"/><rect x="1613" y="131.1" width="1" height="1.6" fill="#d4d4d4" opacity=".45"/><rect x="1614" y="131.1" width="4" height="1.6" fill="#aadafa"/><rect x="1619" y="131.1" width="1" height="1.6" fill="#d4d4d4" opacity=".45"/><rect x="1621" y="131.1" width="19" height="1.6" fill="#dcdcaf"/><rect x="1640" y="131.1" width="1" height="1.6" fill="#d4d4d4" opacity=".45"/><rect x="1641" y="131.1" width="4" height="1.6" fill="#679ad1"/><rect x="1645" y="131.1" width="2" height="1.6" fill="#d4d4d4" opacity=".45"/><rect x="1596" y="133.1" width="6" height="1.6" fill="#dcdcaf"/><rect x="1602" y="133.1" width="1" height="1.6" fill="#d4d4d4" opacity=".45"/><rect x="1603" y="133.1" width="4" height="1.6" fill="#aadafa"/><rect x="1607" y="133.1" width="1" height="1.6" fill="#d4d4d4" opacity=".45"/><rect x="1609" y="133.1" width="4" height="1.6" fill="#aadafa"/><rect x="1613" y="133.1" width="1" height="1.6" fill="#d4d4d4" opacity=".45"/><rect x="1615" y="133.1" width="3" height="1.6" fill="#aadafa"/><rect x="1618" y="133.1" width="2" height="1.6" fill="#d4d4d4" opacity=".45"/><rect x="1596" y="135.1" width="20" height="1.6" fill="#dcdcaf"/><rect x="1616" y="135.1" width="2" height="1.6" fill="#d4d4d4" opacity=".45"/><rect x="1618" y="135.1" width="6" height="1.6" fill="#71c6b1"/><rect x="1625" y="135.1" width="2" height="1.6" fill="#d4d4d4" opacity=".45"/><rect x="1627" y="135.1" width="4" height="1.6" fill="#aadafa"/><rect x="1631" y="135.1" width="2" height="1.6" fill="#d4d4d4" opacity=".45"/><rect x="1596" y="137.1" width="21" height="1.6" fill="#dcdcaf"/><rect x="1617" y="137.1" width="2" height="1.6" fill="#d4d4d4" opacity=".45"/><rect x="1619" y="137.1" width="6" height="1.6" fill="#71c6b1"/><rect x="1626" y="137.1" width="2" height="1.6" fill="#d4d4d4" opacity=".45"/><rect x="1628" y="137.1" width="4" height="1.6" fill="#aadafa"/><rect x="1632" y="137.1" width="2" height="1.6" fill="#d4d4d4" opacity=".45"/><rect x="1596" y="139.1" width="19" height="1.6" fill="#dcdcaf"/><rect x="1615" y="139.1" width="2" height="1.6" fill="#d4d4d4" opacity=".45"/><rect x="1617" y="139.1" width="6" height="1.6" fill="#71c6b1"/><rect x="1624" y="139.1" width="2" height="1.6" fill="#d4d4d4" opacity=".45"/><rect x="1626" y="139.1" width="4" height="1.6" fill="#aadafa"/><rect x="1630" y="139.1" width="2" height="1.6" fill="#d4d4d4" opacity=".45"/><rect x="1596" y="143.1" width="3" height="1.6" fill="#679ad1"/><rect x="1600" y="143.1" width="6" height="1.6" fill="#aadafa"/><rect x="1607" y="143.1" width="1" height="1.6" fill="#d4d4d4" opacity=".45"/><rect x="1609" y="143.1" width="6" height="1.6" fill="#dcdcaf"/><rect x="1615" y="143.1" width="1" height="1.6" fill="#d4d4d4" opacity=".45"/><rect x="1616" y="143.1" width="4" height="1.6" fill="#aadafa"/><rect x="1620" y="143.1" width="2" height="1.6" fill="#d4d4d4" opacity=".45"/><rect x="1596" y="145.1" width="6" height="1.6" fill="#dcdcaf"/><rect x="1602" y="145.1" width="1" height="1.6" fill="#d4d4d4" opacity=".45"/><rect x="1603" y="145.1" width="6" height="1.6" fill="#aadafa"/><rect x="1610" y="145.1" width="2" height="1.6" fill="#d4d4d4" opacity=".45"/><rect x="1613" y="145.1" width="1" height="1.6" fill="#bacdab"/><rect x="1614" y="145.1" width="2" height="1.6" fill="#d4d4d4" opacity=".45"/><rect x="1592" y="147.1" width="1" height="1.6" fill="#f9d849" opacity=".45"/></g>
<rect x="1586" y="25" width="2" height="2" fill="#6b9e1e"/>
<rect x="1586" y="41" width="2" height="50" fill="#3e90c6"/>
<rect x="1586" y="123" width="2" height="6" fill="#3e90c6"/>
</svg>
<div id="panel">
<span class="tab" style="left:7px;letter-spacing:-.33px">PROBLEMS</span><span class="tab" style="left:123.5px;letter-spacing:-.07px">OUTPUT</span><span class="tab act" style="left:220.4px;letter-spacing:-.09px">TERMINAL</span><span class="tab" style="left:330.7px;letter-spacing:-.36px">PORTS</span><span class="tab" style="left:415.4px;letter-spacing:-.18px">GITLENS</span>
<div id="tul"></div><i style="position:absolute;left:1659px;top:25px;width:1px;height:2px;background:#8a8a8a;display:block"></i>
<div id="thead"><b>TERMINAL</b></div>
<div id="term"><div class="tl">rm <span class="hy">-</span>rf recovery</div><div class="tl">mkdir recovery</div><div class="tl">cd recovery &amp;&amp; ../bin/recover ../usb.dmg</div><div class="tl">ROOT</div><div class="tl">    ?0</div><div class="tl">        PASSWORD</div><div class="tl"><b class="tg">mvazhaep@labradoodle</b>:<b class="tb">~/cs24/pretest<span class="hy">-</span>mvazhaep</b>$ <span class="tcur"></span></div></div>
</div>
<div id="status"><span style="left:27.7px">main</span><span style="left:186.5px">0</span><span style="left:226.5px">0</span><span style="left:285px">0</span><span style="left:342.6px">Live Share</span><span style="left:1043.7px">You, 1 minute ago</span><span style="left:1205px">Ln 31, Col 50</span><span style="left:1331px">Spaces: 4</span><span style="left:1431px">UTF-8</span><span style="left:1503.6px">LF</span><span style="left:1547px">C</span><span style="left:1578px">Mac</span>
<svg style="position:absolute;left:0;top:0" width="1660" height="30" viewBox="0 0 1660 30"><g fill="none" stroke="#fff" stroke-width="1.4"><circle cx="89.2" cy="14.4" r="6.4"/><circle cx="125.3" cy="9.2" r="2.4"/><path d="M130 6.2 V20"/><circle cx="172" cy="13.8" r="7.2"/><path d="M204 20 L212 6.6 L220 20 Z"/><path d="M264.5 6.8 Q260.5 12 264.5 17 M274 6.8 Q278 12 274 17"/><path d="M267.3 8.6 Q265.3 12 267.3 15.4 M271.2 8.6 Q273.2 12 271.2 15.4"/><path d="M322 9.5 H328 V5.9 L334.5 11.5 L328 17 V13.5 H322 Z"/><path d="M1028.6 5 V22"/><path d="M30.5 8.6 V12" stroke-width="1.2"/><path d="M1647.5 7 H1662 V20 H1647.5 Z"/></g></svg></div>
</div></body></html>
